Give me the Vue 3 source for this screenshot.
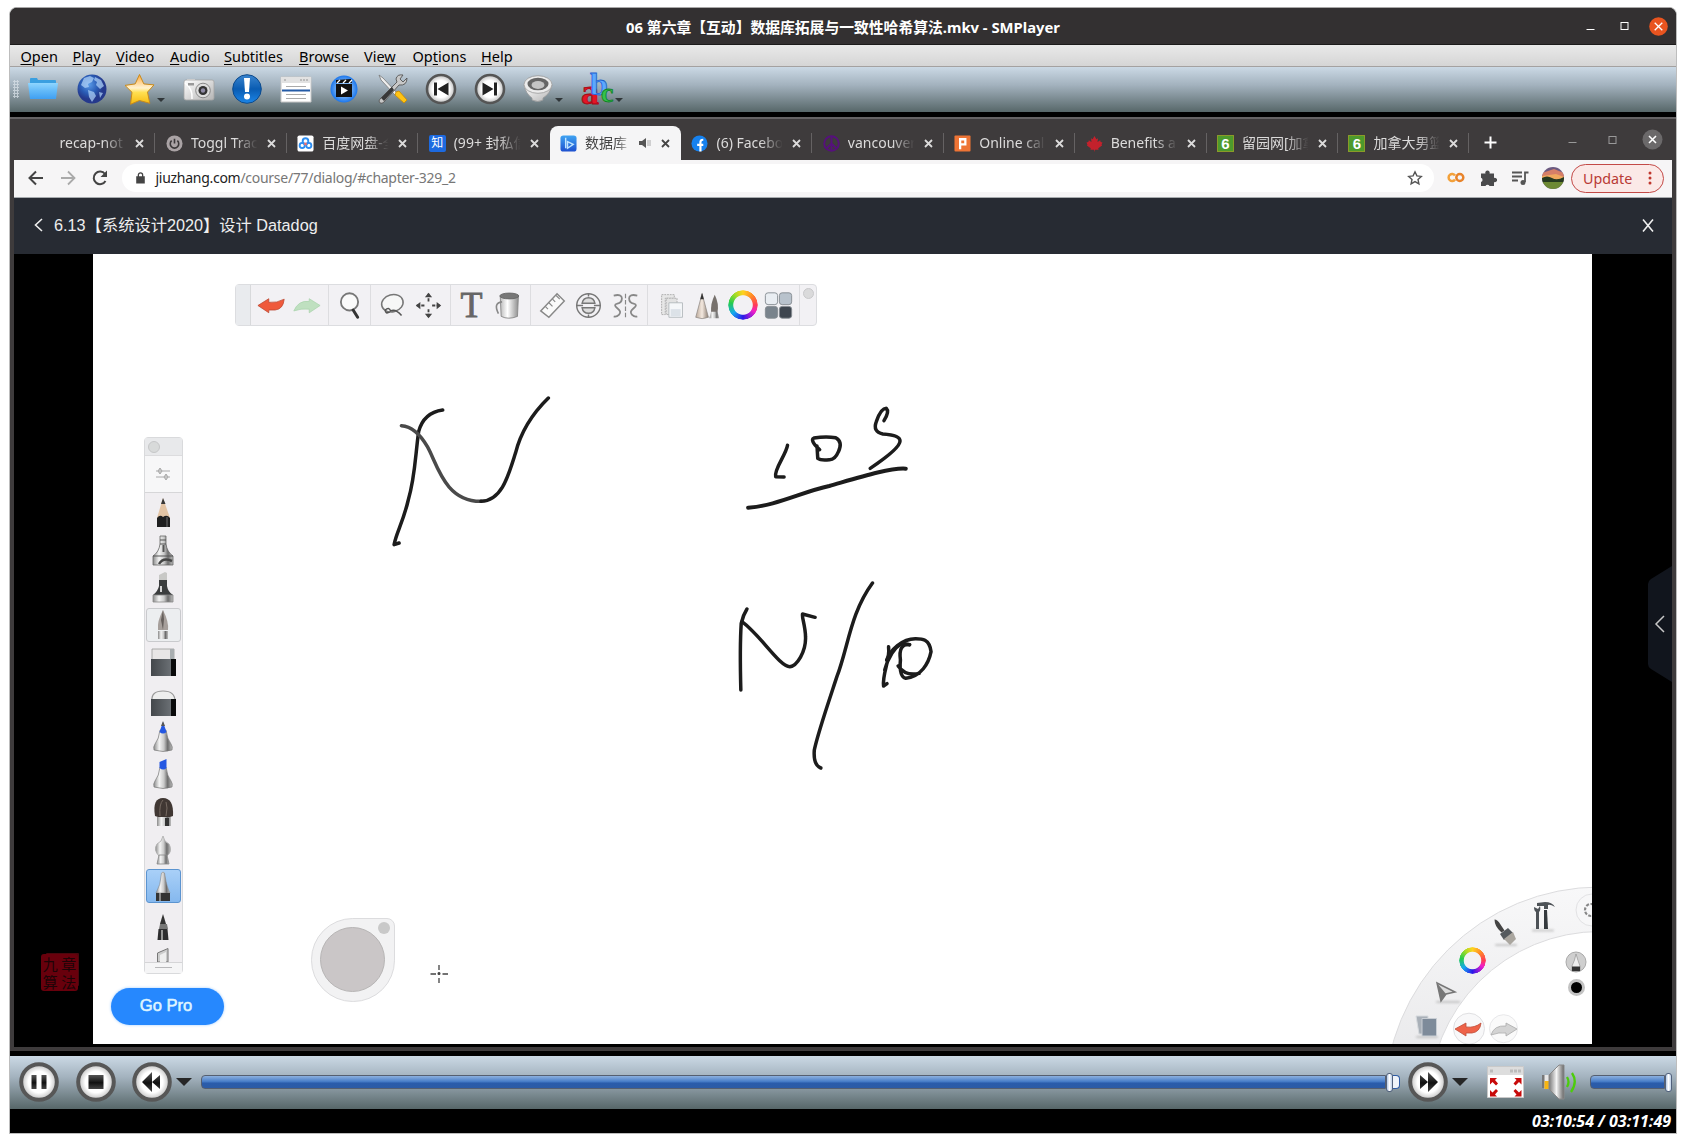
<script setup>
const menus = [
  { pre: '', key: 'O', post: 'pen', w: 52 },
  { pre: '', key: 'P', post: 'lay', w: 43.5 },
  { pre: '', key: 'V', post: 'ideo', w: 54 },
  { pre: '', key: 'A', post: 'udio', w: 54 },
  { pre: '', key: 'S', post: 'ubtitles', w: 75 },
  { pre: '', key: 'B', post: 'rowse', w: 65 },
  { pre: 'Vie', key: 'w', post: '', w: 48.5 },
  { pre: 'Op', key: 't', post: 'ions', w: 68.5 },
  { pre: '', key: 'H', post: 'elp', w: 40 },
]

const roundButton = (glyph) =>
  `<circle cx="16" cy="16" r="14" fill="url(#btn)" stroke="#555" stroke-width="2.6"/>${glyph}`

const tools = [
  { name: 'open', icon: '<path d="M3 6q0-1 1-1h6l1 2h17q1 0 1 1v4H3z" fill="#3a9fe0"/><path d="M1 10h30l-2 16H3z" fill="url(#folder)"/>' },
  { name: 'globe', icon: '<circle cx="16" cy="16" r="14.5" fill="url(#globe)"/><path d="M8 5l6-2 4 2-2 4-4 2 1 3-4 1-4-3zM19 4l6 3 3 6-4 3-4-4 1-3-3-2zM12 17l6 2 2 4-4 6-3-5zM23 19l4 1-3 5z" fill="#b4d6fa" opacity=".7"/>' },
  { name: 'favorites', menu: true, icon: '<path d="M15.500 1.500l4.300 9.400 10.200 1-6.500 7.200 2.300 11.200-10.300-2.800-9 3.800 1.500-12L1 12.400l10.200-1.500z" fill="url(#star)" stroke="#c98a1b" stroke-width="1"/>' },
  { name: 'screenshot', icon: '<path d="M4 6h8v3h-8z" fill="#e4e4e4"/><rect x="1" y="7" width="30" height="20" rx="2" fill="url(#metal)" stroke="#a5a5a5" stroke-width=".8"/><path d="M2 10q8 6 7 16" stroke="#fff" stroke-width="1.500" fill="none"/><rect x="5" y="10" width="6" height="2.500" fill="#999"/><circle cx="20" cy="17.500" r="7.300" fill="#ddd" stroke="#888"/><circle cx="20" cy="17.500" r="4.500" fill="#333"/><circle cx="20" cy="17.500" r="2.200" fill="#8f8ba5"/>' },
  { name: 'info', icon: '<circle cx="16" cy="16" r="14.300" fill="url(#info)" stroke="#0d4a8c"/><path d="M13 5h6l-1 14h-4z" fill="#fff"/><circle cx="16" cy="23.500" r="3" fill="#fff"/>' },
  { name: 'playlist', icon: '<path d="M1 4h30v25H1z" fill="#fff" stroke="#c5c5c5"/><path d="M1 4h30v6H1z" fill="#e2e2e2"/><path d="M20 7h8M4 7h3" stroke="#bbb" stroke-width="2" stroke-dasharray="2 1"/><path d="M6 13.500h20M6 21.500h20M6 25.500h20" stroke="#aaa"/><path d="M2 17.500h28" stroke="#245ba6" stroke-width="2"/>' },
  { name: 'media', icon: '<circle cx="16" cy="16" r="13.500" fill="url(#media)"/><path d="M8 11h16v13H8z" fill="#111"/><path d="M8 7l15-1 1 4H8z" fill="#111"/><path d="M9 10l3-3M15 10l3-3M21 10l3-3" stroke="#fff" stroke-width="1.300"/><path d="M13 13.500l7 4-7 4z" fill="#fff"/>' },
  { name: 'preferences', icon: '<path d="M2 2l4 3 14 15-2 2L4 7z" fill="#eee" stroke="#777" stroke-width=".8"/><path d="M19 19l3-1 8 9-3 3-9-8z" fill="#ffc313" stroke="#c98a00" stroke-width=".8"/><path d="M30 5l-4 4-3-3 3-4q-6-1-7 4l1 3L3 26q-2 2 0 4 2 1 4-1L22 12q8 1 8-7z" fill="#c8c8c8" stroke="#555" stroke-width=".9"/><path d="M4 25l3 3L17 17l-2-3z" fill="#383838"/>' },
  { name: 'previous', icon: roundButton('<path d="M9 9.500h3v13H9zM23.500 9.500v13L12.500 16z" fill="#222"/>') },
  { name: 'next', icon: roundButton('<path d="M20 9.500h3v13h-3zM8.500 9.500v13L19.500 16z" fill="#222"/>') },
  { name: 'volume', menu: true, icon: '<path d="M2 12q2 9 8 13v2q6 3 11 0v-2q7-4 9-13z" fill="url(#metal)" stroke="#999" stroke-width=".8"/><ellipse cx="16" cy="11.500" rx="14" ry="8.800" fill="#ececec" stroke="#999" stroke-width=".8"/><ellipse cx="16" cy="11" rx="10.500" ry="6.300" fill="#666"/><ellipse cx="16" cy="12" rx="6.500" ry="3.900" fill="#c4c4c4"/>' },
  { name: 'subtitles', menu: true, abc: true },
]

const tabs = [
  { title: 'recap-not', icon: '' },
  { title: 'Toggl Trac', icon: '<circle cx="9" cy="9" r="8.500" fill="#aaa3a5"/><path d="M6 6a4.500 4.500 0 1 0 6 0M9 4v5" stroke="#3b3839" stroke-width="1.700" fill="none"/>' },
  { title: '百度网盘-全', icon: '<rect x=".5" y=".5" width="17" height="17" rx="2" fill="#fff"/><circle cx="9" cy="6.500" r="3" stroke="#2d8df0" stroke-width="2" fill="none"/><circle cx="5.500" cy="11" r="2.700" stroke="#2d8df0" stroke-width="2" fill="none"/><circle cx="12.500" cy="11" r="2.700" stroke="#2d8df0" stroke-width="2" fill="none"/><circle cx="9" cy="9.500" r="1.500" fill="#f06f6f"/>' },
  { title: '(99+ 封私信', glyph: '知', bg: '#1d6ae0', icon: '' },
  { title: '数据库', active: true, icon: '<rect x=".5" y=".5" width="17" height="17" rx="3" fill="url(#info2)"/><path d="M6 3v11M8 7l6 3-6 4z" stroke="#bfe4ff" stroke-width="1.500" fill="none"/>' },
  { title: '(6) Facebo', icon: '<circle cx="9" cy="9" r="8.500" fill="#1681ee"/><path d="M10 17.500v-7H6.500M10 10.500h3M10 11V7.500q0-2.500 3-2.500" stroke="#fff" stroke-width="2.300" fill="none"/>' },
  { title: 'vancouver', icon: '<g stroke="#56107c" stroke-width="2" fill="none"><circle cx="9" cy="9" r="7.700"/><path d="M9 1v16M9 9l-5.500 5.500M9 9l5.500 5.500"/></g>' },
  { title: 'Online cal', icon: '<rect x=".5" y=".5" width="17" height="17" rx="1" fill="#ee7435"/><path d="M6.500 15V4.500h5.500v5.500H6.500" stroke="#fff" stroke-width="2.400" fill="none"/>' },
  { title: 'Benefits a', icon: '<path d="M9 1l2 3.500 1.700-1-.5 4L15 5.500l.5 2 2 .5-1 2 .5 1-4 3 .3 1.500H9.500L9 18l-.5-2.500H4.700L5 14l-4-3 .5-1-1-2 2-.5.5-2 2.800 2-.5-4 1.700 1z" fill="#c3212c"/>' },
  { title: '留园网[加拿', glyph: '6', bg: '#4d9a2c', box: true, icon: '' },
  { title: '加拿大男篮', glyph: '6', bg: '#4d9a2c', box: true, icon: '' },
]

const undo = '<path d="M1 16l12-7.500v4q9 1 17-3.500-1 11-10 12h-7v3z" fill="#ef5a3c" stroke="#b9432d" stroke-width=".8"/>'
const groups = [
  { w: 77.5, icons: [undo, '<path d="M31 16L19 8.500v3Q7 10 2 22q8-3 17-2v4z" fill="#bfe0c0" stroke="#a7d3aa" stroke-width=".8"/>'] },
  { w: 42.5, icons: ['<circle cx="16" cy="12" r="9.500" fill="#fafafa" stroke="#777" stroke-width="2"/><path d="M20 21l5 8" stroke="#333" stroke-width="3.300" stroke-linecap="round"/>'] },
  { w: 79.5, icons: ['<ellipse cx="16" cy="13.500" rx="12" ry="9.500" fill="#f7f7f7" stroke="#777" stroke-width="1.700" transform="rotate(-15 16 14)"/><path d="M8 21q4-4 6 1 5-3 12 5M13 23q-5 3-5-2" stroke="#555" stroke-width="1.700" fill="none"/>', '<path d="M16 3v9M16 20v9M3 16h9M20 16h9" stroke="#444" stroke-width="2" stroke-dasharray="3.500 1.500"/><path d="M16 2l4 5h-8zM16 30l4-5h-8zM2 16l5-4v8zM30 16l-5-4v8z" fill="#444"/>'] },
  { w: 80, icons: ['T', '<path d="M8 6l1 22q8 4 18 0l1-22z" fill="url(#bucket)" stroke="#888"/><ellipse cx="18" cy="5.500" rx="10.500" ry="3.200" fill="#777" stroke="#666"/><path d="M10 12Q0 13 6 25" stroke="#888" fill="none" stroke-width="1.800"/>'] },
  { w: 117.4, icons: ['<path d="M3 22L21 3l8 8L12 29z" fill="#fafafa" stroke="#888" stroke-width="1.600"/><path d="M8 17l3 3M12 13l4 4M16 9l3 3M20 5l4 4" stroke="#888" stroke-width="1.300"/>', '<g fill="none" stroke="#777" stroke-width="1.600"><circle cx="16" cy="16" r="13"/><path d="M9 13.500q1-6 7-6t7 6zM9 18.500q1 6 7 6t7-6zM3 16h7M22 16h7M16 3v3M16 26v3" fill="#ddd"/></g>', '<g fill="none" stroke="#888" stroke-width="2"><path d="M3 5q9-2 9 3t-5 6 0 5 2 7-6 2M29 5q-9-2-9 3t5 6 0 5-2 7 6 2"/><path d="M16 3v26" stroke-dasharray="5 2" stroke-width="1.300"/></g>'] },
  { w: 151.9, icons: ['<path d="M4 4h14v4H8v18H4z" fill="#e7e7e7" stroke="#aaa" stroke-dasharray="2 1"/><path d="M9 8h12v18H9z" fill="#e2e2e2" stroke="#aaa" stroke-dasharray="2 1"/><path d="M12 13h15v16H12z" fill="#f5f7f9" stroke="#b3b8bc"/><path d="M14 20h11v8H14z" fill="#dce2e8"/>', '<path d="M3 29L10 3l7 26q-7 3-14 0z" fill="url(#wood)" stroke="#8e8883" stroke-width=".8"/><path d="M10 2l2 7H8z" fill="#333"/><path d="M20 24q-1-10 4-20 5 10 3 20z" fill="#77716d"/><path d="M20 23h7l2 7H18z" fill="url(#chrome)"/>', 'wheel', '<g stroke="#858b91"><rect x="1.500" y="2" width="13.500" height="13" rx="3" fill="#e9edf2"/><rect x="17" y="2" width="13.500" height="13" rx="3" fill="#b8c2cc"/><rect x="1.500" y="17" width="13.500" height="13" rx="3" fill="#79838c"/><rect x="17" y="17" width="13.500" height="13" rx="3" fill="#3e464f"/></g>'] },
]

const nib = (tip) => `<path d="M13 9q-1 9-5 14-2 3-1 6 9 3 18 0 1-3-1-6-4-5-5-14z" fill="url(#chrome)" stroke="#777" stroke-width=".7"/>${tip}`
const brushes = [
  { icon: '<path d="M16 1l7 20H10z" fill="#e3c4a5"/><path d="M16 1l2.500 6h-4.500z" fill="#383838"/><path d="M10 30V21q3-4 6-1 4-3 7 1v9z" fill="#1f1f20"/><path d="M20 20v10" stroke="#555" stroke-width="1.500"/>' },
  { icon: '<path d="M13 1h6v8q1 8 7 12v9H6v-9q6-4 7-12z" fill="url(#chrome)" stroke="#666" stroke-width=".8"/><path d="M6 21h20M13 5h6M13 9h6" stroke="#555" stroke-width="1.200"/><path d="M12 29q4-7 13-3" stroke="#444" stroke-width="2.500" fill="none"/><path d="M16.500 10v7" stroke="#555" stroke-width="2"/>' },
  { icon: '<path d="M12 8V3l6-3 2 1v7z" fill="#c8c8c6"/><path d="M12 8h8v6q1 6 6 9H6q5-4 6-9z" fill="#3b3d3e"/><path d="M14 14v6" stroke="#d5d5d5" stroke-width="2"/><path d="M6 23h20v7H6z" fill="url(#chrome)" stroke="#888" stroke-width=".8"/>' },
  { boxed: true, icon: '<path d="M16 1q6 12 5 20H11Q10 12 16 1z" fill="#a69f9b"/><path d="M16 1l1 9-1 11-2-10z" fill="#66605d"/><path d="M11 22h10v8H11z" fill="url(#chrome)"/>' },
  { icon: '<path d="M5 3h22v12H5z" fill="#e8e6e6" stroke="#999" stroke-width=".8"/><path d="M23 3h4v12h-4z" fill="#a8adb0"/><path d="M4 13h25v17H4z" fill="url(#eraser)"/><path d="M24 13h5v17h-5z" fill="#08090a"/>' },
  { icon: '<path d="M5 17Q4 7 16 7t12 10z" fill="#eee" stroke="#999" stroke-width="1.200"/><path d="M4 15h25v17H4z" fill="url(#eraser)"/><path d="M24 15h5v17h-5z" fill="#08090a"/>' },
  { icon: nib('<path d="M16 1l3.500 10q-3.500 3-7 0z" fill="#2457e2"/><path d="M16 0l2 5h-4z" fill="#555"/>') },
  { icon: nib('<path d="M12.500 10V4l7-3v9q-3 3-7 0z" fill="#2457e2"/>') },
  { icon: '<path d="M8 20Q5 2 16 2t10 18q-9 4-18 0z" fill="#403733"/><path d="M13 20Q12 8 16 4M19 20q2-9 0-14" stroke="#766a62" fill="none"/><path d="M10 21h14v9H10z" fill="url(#chrome)"/><path d="M18 22h4v8h-4z" fill="#333"/>' },
  { icon: '<path d="M16 3q1 6 6 8 4 7-2 12h-8q-6-6-2-12 5-2 6-8z" fill="url(#chrome)" stroke="#aaa" stroke-width=".8"/><path d="M12 22h8l2 9H10z" fill="url(#chrome)" stroke="#888" stroke-width=".8"/>' },
  { selected: true, icon: '<path d="M16 2q2 0 2 4 2 12 5 17H9q5-9 5-17 0-4 2-4z" fill="url(#chrome)" stroke="#888" stroke-width=".6"/><path d="M9 23h14v8H9z" fill="#333"/><path d="M12 23h2v8h-2z" fill="#888"/>' },
  { icon: '<path d="M16 6q1 3 3 10h-6q2-7 3-10z" fill="#333"/><path d="M13 16h7l1 5H12z" fill="#777"/><path d="M11.500 21h9l1 11H10.500z" fill="#2d2d2f"/><path d="M15 22v10" stroke="#bbb" stroke-width="1.500"/>' },
]

const playback = [
  { name: 'pause', icon: '<path d="M12.500 13h5v14h-5zM22.500 13h5v14h-5z" fill="url(#dark)"/>' },
  { name: 'stop', icon: '<path d="M12.500 13h15v14h-15z" fill="url(#dark)"/>' },
  { name: 'rewind', icon: '<path d="M20 10v20l-10-10zM28 13v14l-8-7z" fill="url(#dark)"/>' },
]
</script>

<template>
  <svg class="defs" width="0" height="0" aria-hidden="true">
    <defs>
      <radialGradient id="btn"><stop offset=".6" stop-color="#fff" /><stop offset="1" stop-color="#bdbdbd" /></radialGradient>
      <linearGradient id="folder" x2="0" y2="1"><stop stop-color="#8fd6ff" /><stop offset=".5" stop-color="#62b9f8" /><stop offset="1" stop-color="#3f9ff2" /></linearGradient>
      <radialGradient id="globe" cx=".4" cy=".35"><stop stop-color="#5a9be8" /><stop offset=".6" stop-color="#2a5cb5" /><stop offset="1" stop-color="#25398c" /></radialGradient>
      <linearGradient id="star" x2="0" y2="1"><stop stop-color="#ffa93c" /><stop offset=".45" stop-color="#fff2cf" /><stop offset=".6" stop-color="#ffe052" /><stop offset="1" stop-color="#f6b90e" /></linearGradient>
      <linearGradient id="metal" x2="1" y2="1"><stop stop-color="#fff" /><stop offset="1" stop-color="#b4b4b4" /></linearGradient>
      <linearGradient id="info" x2="0" y2="1"><stop stop-color="#3a85cf" /><stop offset=".5" stop-color="#0a5cb2" /><stop offset="1" stop-color="#1c86e8" /></linearGradient>
      <linearGradient id="info2" x2="0" y2="1"><stop stop-color="#3fa4f2" /><stop offset="1" stop-color="#1d50cf" /></linearGradient>
      <radialGradient id="media"><stop stop-color="#d7f0ff" /><stop offset="1" stop-color="#1b76ec" /></radialGradient>
      <linearGradient id="bucket"><stop stop-color="#bbb" /><stop offset=".4" stop-color="#fff" /><stop offset="1" stop-color="#8e8e8e" /></linearGradient>
      <linearGradient id="chrome"><stop stop-color="#8a8a8a" /><stop offset=".3" stop-color="#f4f4f4" /><stop offset=".55" stop-color="#c9c9c9" /><stop offset=".75" stop-color="#6d6d6d" /><stop offset="1" stop-color="#bdbdbd" /></linearGradient>
      <linearGradient id="wood"><stop stop-color="#b9a798" /><stop offset=".5" stop-color="#f3e8df" /><stop offset="1" stop-color="#8b7c71" /></linearGradient>
      <linearGradient id="eraser"><stop stop-color="#43474b" /><stop offset="1" stop-color="#757a7f" /></linearGradient>
      <linearGradient id="dark" x2="0" y2="1"><stop stop-color="#555" /><stop offset=".55" stop-color="#111" /><stop offset="1" stop-color="#444" /></linearGradient>
      <linearGradient id="speaker"><stop stop-color="#777" /><stop offset=".5" stop-color="#f4f4f4" /><stop offset="1" stop-color="#666" /></linearGradient>
      <linearGradient id="band" x2="0" y2="1"><stop stop-color="#f8f8f9" /><stop offset="1" stop-color="#e6e6e8" /></linearGradient>
    </defs>
  </svg>

  <main class="window">
    <header class="titlebar">
      <span class="title">06 第六章【互动】数据库拓展与一致性哈希算法.mkv - SMPlayer</span>
      <div class="win-buttons">
        <svg width="9" height="12"><path d="M.5 9.500h8" stroke="#fff" /></svg>
        <svg width="9" height="10"><rect x="1" y="1.500" width="7" height="7" fill="none" stroke="#fff" /></svg>
        <svg width="19" height="19"><circle cx="9.500" cy="9.500" r="9.300" fill="#e9541f" /><path d="M5.700 5.700l7.600 7.600M13.300 5.700l-7.600 7.600" stroke="#fff" stroke-width="1.300" /></svg>
      </div>
    </header>

    <nav class="menubar">
      <span v-for="m in menus" :key="m.key" :style="{ width: m.w + 'px' }">{{ m.pre }}<u>{{ m.key }}</u>{{ m.post }}</span>
    </nav>

    <div class="toolbar">
      <i class="grip"></i>
      <div v-for="t in tools" :key="t.name" class="tool" :class="{ wide: t.menu }">
        <svg v-if="t.abc" class="abc" width="33" height="34" viewBox="0 0 33 34">
          <text x="0" y="32.500" font-size="36" fill="#e41525" stroke="#a30613">a</text>
          <text x="9" y="24" font-size="32" fill="#5ba8ff" stroke="#1c5fd0">b</text>
          <text x="20" y="30.500" font-size="28" fill="#35c24b" stroke="#0f7f24">c</text>
        </svg>
        <svg v-else width="32" height="32" viewBox="0 0 32 32" v-html="t.icon"></svg>
        <i v-if="t.menu" class="caret"></i>
      </div>
    </div>

    <section class="video">
      <div class="browser">
        <div class="tabstrip">
          <div v-for="(t, i) in tabs" :key="i" class="tab" :class="{ active: t.active, plain: i === 3 }">
            <span v-if="t.glyph" class="fav" :class="{ box: t.box }" :style="{ background: t.bg }">{{ t.glyph }}</span>
            <svg v-else class="favicon" width="17" height="17" viewBox="0 0 18 18" v-html="t.icon"></svg>
            <span class="tab-title">{{ t.title }}</span>
            <svg v-if="t.active" class="sound" width="12" height="10"><path d="M0 3h3l4-3v10L3 7H0z" fill="#555" /><path d="M9 2v6M11 2v6" stroke="#aaa" /></svg>
            <svg class="close" width="9" height="9"><path d="M1 1l7 7M8 1L1 8" stroke="currentColor" stroke-width="1.800" /></svg>
          </div>
          <svg class="plus" width="13" height="13"><path d="M6.500 .5v12M.5 6.500h12" stroke="#fff" stroke-width="2" /></svg>
          <div class="chrome-buttons">
            <svg width="9" height="12"><path d="M.5 8.500h8" stroke="#999" /></svg>
            <svg width="9" height="10"><rect x="1" y="1.500" width="7" height="7" fill="none" stroke="#999" /></svg>
            <svg width="21" height="21"><circle cx="10.500" cy="10.500" r="10" fill="#6b696a" /><path d="M7 7l7 7M14 7l-7 7" stroke="#fff" stroke-width="1.600" /></svg>
          </div>
        </div>

        <div class="addressbar">
          <div class="nav-icons">
            <svg width="16" height="16" viewBox="0 0 16 16"><path d="M15 8H2M8 1.500L1.500 8 8 14.500" stroke="#444" stroke-width="2" fill="none" /></svg>
            <svg width="16" height="16" viewBox="0 0 16 16"><path d="M1 8h13M8 1.500L14.500 8 8 14.500" stroke="#aaa" stroke-width="1.800" fill="none" /></svg>
            <svg width="16" height="16" viewBox="0 0 16 16"><path d="M13.500 11A6.300 6.300 0 1 1 13 4" stroke="#444" stroke-width="2" fill="none" /><path d="M15 .5v6.500H8.500z" fill="#444" /></svg>
          </div>
          <div class="omnibox">
            <svg width="9" height="12" viewBox="0 0 10 14"><path d="M0 5h10v8.500H0z" fill="#444" /><path d="M2.500 6V3.500a2.500 2.500 0 0 1 5 0V6" stroke="#444" stroke-width="1.500" fill="none" /></svg>
            <span class="url"><b>jiuzhang.com</b>/course/77/dialog/#chapter-329_2</span>
            <svg class="bookmark" width="16" height="16" viewBox="0 0 16 16"><path d="M8 1.800l1.900 4.100 4.400.5-3.300 3 .9 4.400L8 11.600l-3.900 2.200.9-4.400-3.300-3 4.400-.5z" fill="none" stroke="#555" stroke-width="1.400" /></svg>
          </div>
          <div class="ext-icons">
            <svg width="18" height="18" viewBox="0 0 18 18"><g fill="none" stroke-width="2.500"><path d="M8 6.500A3.500 3.500 0 1 0 8 10.500" stroke="#f3a13a" /><circle cx="12.800" cy="8.500" r="3.500" stroke="#e8832a" /></g></svg>
            <svg width="18" height="18" viewBox="0 0 18 18"><path d="M2 4.500h4.500a2.200 2.200 0 1 1 4 0H15V9a2.200 2.200 0 1 1 0 4v4h-4.500a2.200 2.200 0 0 0-4 0H2v-4a2.200 2.200 0 0 0 0-4.200z" fill="#4a4a4c" /></svg>
            <svg width="18" height="18" viewBox="0 0 18 18"><path d="M1 3.500h10M1 7.500h10M1 11.500h6M14 13V3.500h3.500" stroke="#555" stroke-width="1.800" fill="none" /><circle cx="12" cy="13.500" r="2.500" fill="#555" /></svg>
            <svg width="22" height="22" viewBox="0 0 22 22"><clipPath id="av"><circle cx="11" cy="11" r="11" /></clipPath><g clip-path="url(#av)"><path d="M0 0h22v22H0z" fill="#6c5a80" /><path d="M0 6l12-4 10 4v6H0z" fill="#d67f68" /><path d="M0 9l14-2 8 3v3H0z" fill="#f0a95e" /><path d="M0 11q5-3 10 0t12-1v6H0z" fill="#263a20" /><path d="M0 15h22v7H0z" fill="#6d8934" /></g></svg>
          </div>
          <button class="update">Update<svg width="4" height="14"><g fill="#c0362c"><circle cx="2" cy="2" r="1.500" /><circle cx="2" cy="7" r="1.500" /><circle cx="2" cy="12" r="1.500" /></g></svg></button>
        </div>

        <div class="lesson">
          <svg width="9" height="14" viewBox="0 0 9 14"><path d="M8 1L1.500 7 8 13" stroke="#eee" stroke-width="1.600" fill="none" /></svg>
          <span class="lesson-title">6.13【系统设计2020】设计 Datadog</span>
          <svg class="lesson-close" width="12" height="13"><path d="M1 .5l10 12M11 .5l-10 12" stroke="#eee" stroke-width="1.600" /></svg>
        </div>

        <div class="stage">
          <div class="left-gutter">
            <div class="seal"><span>九</span><span>章</span><span>算</span><span>法</span></div>
          </div>
          <div class="board">
            <svg class="ink" width="1499" height="790" viewBox="93 254 1499 790">
              <g transform="translate(370 380) scale(.3827 .33333)" fill="none" stroke="#1c1c1c" stroke-linecap="round" stroke-linejoin="round">
                <g class="pen">
                  <path d="M190 90Q140 98 127 155C118 230 118 290 100 360 87 425 68 460 63 494L76 489" />
                  <path d="M82 137Q120 140 150 200C175 250 195 365 290 364" stroke="#4a4a4a" />
                  <path d="M290 364C345 362 362 285 380 220 395 150 425 100 466 54" />
                  <path d="M1091 196C1087 225 1055 268 1060 290L1082 291" />
                  <path d="M1175 209Q1148 180 1160 174 1190 168 1217 173 1236 185 1224 215 1215 240 1200 239 1178 242 1170 235L1168 198" />
                  <path d="M1343 122Q1358 95 1349 85 1335 85 1323 125 1313 155 1340 162 1385 165 1385 183 1385 205 1307 265" />
                  <path class="bold" d="M988 383C1060 378 1130 335 1200 318 1270 295 1360 262 1400 266" />
                  <path d="M985 687Q975 705 970 730 966 800 969 930" />
                  <path d="M972 725C1020 765 1070 860 1097 860 1115 858 1140 815 1138 770 1138 740 1127 705 1130 702L1163 712" />
                  <path d="M1313 609C1255 700 1250 800 1220 890 1200 960 1170 1060 1161 1110Q1158 1155 1178 1164" />
                  <path d="M1355 800C1360 840 1338 880 1342 918L1351 911M1345 870Q1360 810 1390 790L1410 794" />
                  <path d="M1410 794Q1380 790 1386 840 1382 890 1400 895C1440 890 1460 850 1466 815 1462 775 1440 776 1425 776 1390 776 1360 810 1350 840M1380 858Q1400 890 1435 880" />
                </g>
              </g>
              <g stroke="#444" stroke-width="1.300"><path d="M439 965v5M439 978v5M430.500 974h5.500M442.500 974h5.500" /><circle cx="439" cy="973.500" r=".9" fill="#333" /></g>
              <path d="M1384.600 1102a215.400 215.400 0 0 1 215.400-215v44.500a171 171 0 0 0-171 171z" fill="url(#band)" stroke="#dcdcde" />
              <circle cx="1592" cy="910" r="16" fill="#f7f7f8" stroke="#e2e2e4" />
              <circle cx="1591" cy="910" r="6" fill="none" stroke="#888" stroke-width="2.200" stroke-dasharray="3 1.500" />
              <g class="shade"><path d="M1533 930.500h20M1496 945h20M1437 1002h22M1417 1037h20" stroke="#aaa" stroke-width="2" stroke-linecap="round" opacity=".6" /></g>
              <path d="M1416 1016h12v18h-9z" fill="#a9b0b8" stroke="#d7dade" /><path d="M1422 1018.500h14.500v17.500H1422z" fill="#7e8b9a" stroke="#c9ced4" />
              <path d="M1437 983l18 9-9 2-5 7z" fill="#dcdcdc" stroke="#777" stroke-width="1.500" /><path d="M1437 983l9 11-5 7z" fill="#777" />
              <path d="M1494.500 919.500q3 0 6 5l4 6-3 2q-7-6-7-13z" fill="#444" /><path d="M1500 934l8-6 5 5-9 7z" fill="#555a5e" /><path d="M1504 939l9-7 3 7-6 6z" fill="#aaa69f" />
              <path d="M1534 907q0 4 2 5v17h3v-17q2-2 1-6l-2 3-2-1zM1537 903l8-1q7 0 10 5-5-3-7-2v4h-4v-3h-7z" fill="#4d5257" /><path d="M1544 910h3l1 19h-4z" fill="#353a3e" />
              <circle cx="1576" cy="962" r="10" fill="#cfcfcf" stroke="#aaa" /><path d="M1576 954q2 7 4 12v5h-8v-5q3-6 4-12z" fill="#eee" stroke="#888" stroke-width=".6" /><path d="M1572 966.500h8v4.500h-8z" fill="#333" />
              <circle cx="1576.500" cy="987.500" r="7" fill="#000" stroke="#c3c3c3" stroke-width="3" />
              <circle cx="1469" cy="1028.700" r="15.500" fill="#f8f8f9" stroke="#e0e0e2" /><path d="M1455 1029l11-6v4q9 1 15-4-1 9-9 10h-6v3z" fill="#ee6248" stroke="#be4c37" stroke-width=".8" />
              <circle cx="1503.500" cy="1028.700" r="14" fill="#fafafa" stroke="#e8e8ea" /><path d="M1517 1029l-11-6v3q-12-1-15 9 8-3 15-2v3z" fill="#d3d3d3" stroke="#aaa" stroke-width=".8" />
            </svg>
            <i class="wheel radial-wheel"></i>

            <div class="tool-strip">
              <i class="strip-handle"></i>
              <div v-for="(g, i) in groups" :key="i" class="strip-group" :style="{ width: g.w + 'px' }">
                <template v-for="(ic, j) in g.icons" :key="j">
                  <span v-if="ic === 'T'" class="letter-t">T</span>
                  <i v-else-if="ic === 'wheel'" class="wheel"></i>
                  <svg v-else width="29" height="29" viewBox="0 0 32 32" v-html="ic"></svg>
                </template>
              </div>
              <i class="strip-knob"></i>
            </div>

            <div class="palette">
              <div class="palette-head"><i></i></div>
              <div class="palette-settings"><svg width="16" height="14"><path d="M1 4h14M1 10h14" stroke="#aaa" stroke-width="1.200" /><path d="M5 1l2 3-2 3-2-3zM11 7l2 3-2 3-2-3z" fill="#c4c4c4" stroke="#aaa" /></svg></div>
              <div class="brushes">
                <div v-for="(b, i) in brushes" :key="i" class="brush" :class="{ boxed: b.boxed, selected: b.selected }">
                  <svg width="32" height="32" viewBox="0 0 32 32" v-html="b.icon"></svg>
                </div>
                <svg class="partial" width="12" height="14"><path d="M.5 5L11 .5V14H.5z" fill="#ccc" stroke="#777" /><path d="M3 7l6-3v10H3z" fill="#eee" /></svg>
              </div>
              <div class="palette-foot"><i></i></div>
            </div>

            <div class="puck"><i class="puck-color"></i><i class="puck-dot"></i></div>
            <button class="go-pro">Go Pro</button>
          </div>
          <svg class="drawer" width="24" height="116"><path d="M24 0v116L3 103q-3-2-3-5V18q0-3 3-5z" fill="#11151d" /><path d="M16 50l-8 8 8 8" stroke="#c8c8c8" stroke-width="1.500" fill="none" /></svg>
        </div>
      </div>
    </section>

    <footer class="controls">
      <svg v-for="p in playback" :key="p.name" class="round" width="40" height="40" viewBox="0 0 40 40"><circle cx="20" cy="20" r="17.800" fill="url(#btn)" stroke="#575757" stroke-width="4" /><g v-html="p.icon"></g></svg>
      <i class="drop"></i>
      <div class="seek"><i class="seek-fill"></i><i class="thumb"></i><i class="seek-rest"></i></div>
      <svg class="round forward" width="40" height="40" viewBox="0 0 40 40"><circle cx="20" cy="20" r="17.800" fill="url(#btn)" stroke="#575757" stroke-width="4" /><path d="M12 13v14l8-7zM20 10v20l10-10z" fill="url(#dark)" /></svg>
      <i class="drop second"></i>
      <svg class="fullscreen" width="37" height="32" viewBox="0 0 37 32"><path d="M.5.500h36v31H.5z" fill="#fff" stroke="#c9c9c9" /><path d="M1 1h35v8H1z" fill="#ddd" /><path d="M3 5h3M23 5h3M27 5h3M31 5h3" stroke="#bbb" stroke-width="3" /><g fill="#c80a0a"><path d="M3 12h7l-2 2 3 3.500-2 2L5.500 16 3 18.500zM34.500 12h-7l2 2-3 3.500 2 2L32 16l2.500 2.500zM3 30.500h7l-2-2 3-3.500-2-2L5.500 26.500 3 24zM34.500 30.500h-7l2-2-3-3.500 2-2 3.500 3.500 2.500-2.500z" /></g></svg>
      <svg class="speaker" width="36" height="36" viewBox="0 0 36 36"><path d="M1 11h4v13H1z" fill="#777" /><path d="M3.500 11H8v14H3.500z" fill="#e8e8e8" /><path d="M3.500 17H8v8H3.500z" fill="#f7b512" /><path d="M8 11L18 1h5v34h-5L8 25z" fill="url(#speaker)" stroke="#888" /><path d="M26 13q3 5 0 10M31 9q6 9-1 19" stroke="#4ccd0b" stroke-width="2.300" fill="none" /></svg>
      <div class="volume"><i class="seek-fill"></i><i class="thumb"></i></div>
    </footer>
    <div class="status">03:10:54 / 03:11:49</div>
  </main>
</template>

<style>
body { background: #fff; }
#app { display: flow-root; }
</style>

<style scoped>
* { box-sizing: border-box; }
i { display: block; flex: none; }
svg { display: block; flex: none; }
.defs { position: absolute; }
.window {
  width: 1668px; height: 1127px; margin: 7px 0 0 9px; padding: 0;
  display: flex; flex-direction: column; border: 1px solid #bdbdbd; border-top-color: #a9a8a8;
  border-radius: 8px 8px 0 0; overflow: hidden; background: #000;
  font-family: "Noto Sans", "Noto Sans CJK SC", sans-serif;
}
.titlebar {
  height: 37px; flex: none; display: grid; place-items: center; background: #333031; border-bottom: 1px solid #1c1b1b;
}
.title { grid-area: 1/1; padding-top: 2px; color: #fff; font: bold 14.800px/34px "Noto Sans", "Noto Sans CJK SC", sans-serif; white-space: nowrap; }
.win-buttons { grid-area: 1/1; justify-self: end; display: flex; align-items: center; gap: 25px; margin-right: 8px; }
.win-buttons svg:last-child { margin-left: -5px; }
.menubar { height: 22px; flex: none; display: flex; padding-left: 10.500px; background: linear-gradient(#e9e9e9, #d5d5d5); border-bottom: 1px solid #a4a1a0; }
.menubar span { font-size: 14.500px; line-height: 23px; color: #000; white-space: nowrap; }
.menubar u { text-underline-offset: 2px; text-decoration-thickness: 1px; }
.toolbar { height: 45px; flex: none; display: flex; align-items: center; padding-bottom: 1px; background: linear-gradient(#cbd9e5, #a3b2be 40%, #576769); }
.grip { width: 6px; height: 18px; margin-left: 3px; background: radial-gradient(#dbe3ea 1px, transparent 1.300px) 0 0/3px 3px; opacity: .7; }
.tool { width: 48.500px; height: 32px; padding-left: 8.200px; display: flex; align-items: flex-end; }
.tool.wide { width: 58.500px; }
.caret { border: 4px solid transparent; border-top: 4px solid #303639; border-bottom: 0; margin: 0 0 3px 1px; }
.abc { overflow: visible; font-family: "Liberation Serif", serif; font-weight: bold; stroke-width: .8px; }

.video { height: 944px; flex: none; padding: 5px 0; background: #000; }
.browser { height: 934px; display: flex; flex-direction: column; padding: 0 4px 4px; border-top: 2px solid #656364; background: #3e3b3c; }
.tabstrip { height: 41px; flex: none; display: flex; align-items: flex-end; padding-left: 10px; }
.tab { position: relative; width: 131.400px; height: 34px; padding: 0 11px 0 10.500px; display: flex; align-items: center; color: #dcdbdb; }
.tab::after { content: ""; position: absolute; right: 0; top: 7px; width: 1px; height: 20px; background: #656263; }
.tab.active::after, .tab.plain::after { display: none; }
.favicon, .fav { margin-right: 8px; }
.fav { width: 17px; height: 17px; flex: none; border-radius: 2px; color: #fff; font: 12px/16px "Noto Sans", "Noto Sans CJK SC", sans-serif; text-align: center; }
.fav.box { border: 1px solid #8a9a28; border-radius: 0; font: bold 15px/15px "Liberation Sans", sans-serif; }
.tab-title { width: 68px; flex: none; overflow: hidden; white-space: nowrap; font-size: 14px; line-height: 22px; -webkit-mask-image: linear-gradient(90deg, #000 65%, transparent 98%); mask-image: linear-gradient(90deg, #000 65%, transparent 98%); }
.close { margin-left: auto; }
.tab.active { background: #f5f5f6; border-radius: 8px 8px 0 0; color: #444; }
.active .tab-title { width: 48px; margin-right: 6px; }
.plus { margin: 0 0 11px 15px; }
.chrome-buttons { display: flex; align-items: center; height: 21px; gap: 31px; margin: 0 9px 10px auto; }
.chrome-buttons svg:last-child { margin-left: -6px; }
.addressbar { height: 38px; flex: none; display: flex; align-items: center; padding-bottom: 1px; background: #f6f5f6; border-bottom: 1px solid #a7abae; }
.nav-icons { width: 108px; display: flex; gap: 16px; padding-left: 14px; }
.omnibox { width: 1312px; height: 28px; display: flex; align-items: center; padding: 0 11px 0 13.500px; border-radius: 15px; background: #fff; }
.url { margin-left: 11px; font-size: 14px; letter-spacing: -.28px; line-height: 22px; color: #777; }
.url b { font-weight: 400; color: #222; }
.bookmark { margin-left: auto; }
.ext-icons { display: flex; align-items: center; gap: 14px; margin-left: 13px; }
.ext-icons svg:last-child { margin-left: -1px; }
.update { width: 93px; height: 29px; margin-left: 7px; padding: 0 11px; display: flex; align-items: center; justify-content: space-between; border: 1.500px solid #c34a47; border-radius: 15px; background: #fbe9e7; color: #b83a35; font: 14.300px "Noto Sans", sans-serif; }
.lesson { height: 56px; flex: none; display: flex; align-items: center; padding: 0 18px 2px 19.500px; background: #272b33; color: #eee; }
.lesson-title { margin-left: 11.500px; font: 16.250px/24px "Liberation Sans", "Noto Sans CJK SC", sans-serif; white-space: nowrap; }
.lesson-close { margin-left: auto; }
.stage { height: 793px; flex: none; display: flex; align-items: flex-start; background: #000; }
.left-gutter { width: 79px; height: 793px; padding: 700px 0 0 27px; }
.seal { width: 37px; height: 37px; display: grid; grid-template-columns: 1fr 1fr; place-items: center; border-radius: 3px; background: #68000c; color: #1d0407; font: 15px/17px "Noto Sans CJK SC", sans-serif; box-shadow: 3px -3px 0 -2px #4a070d; }
.board { position: relative; width: 1499px; height: 790px; background: #fff; overflow: hidden; }
.ink { position: absolute; inset: 0; }
.pen { filter: blur(.5px); }
.pen path { vector-effect: non-scaling-stroke; stroke-width: 3.500px; }
.pen .bold { stroke-width: 4px; }
.shade { filter: blur(1px); }
.drawer { margin: 312px 0 0 56px; }

.wheel { width: 30px; height: 30px; border-radius: 50%; background: conic-gradient(#ffd21f, #ff8a28 45deg, #ff3a55 90deg, #f020c8 120deg, #2b18e8 180deg, #16a8f0 230deg, #25cc4c 280deg, #a9dc26 325deg, #ffd21f); -webkit-mask: radial-gradient(circle closest-side, transparent 62%, #000 68%, #000 96%, transparent); mask: radial-gradient(circle closest-side, transparent 62%, #000 68%, #000 96%, transparent); }
.radial-wheel { position: absolute; left: 1366px; top: 692.500px; width: 27px; height: 27px; }
.tool-strip { position: absolute; left: 141.500px; top: 30px; width: 582px; height: 42px; display: flex; border: 1.500px solid #dcdde0; border-radius: 4px; background: #f2f1f4; }
.strip-handle { width: 15.500px; background: #e9ebee; border-right: 1px solid #d8d9db; }
.strip-group { display: flex; align-items: center; justify-content: space-evenly; border-right: 1px solid #dddde0; }
.strip-group:nth-of-type(6) { padding-left: 4px; }
.letter-t { width: 26px; text-align: center; font: 36px/38px "Liberation Serif", serif; color: #666; -webkit-text-stroke: .8px #666; }
.strip-knob { width: 11px; height: 11px; margin: 3px 0 0 3px; border: 1px solid #c9c9cb; border-radius: 50%; background: #dadadb; }

.palette { position: absolute; left: 50.500px; top: 183px; width: 39.500px; height: 537px; display: flex; flex-direction: column; border: 1.500px solid #d9dadc; border-radius: 4px; background: #f0eef1; }
.palette-head { height: 18px; flex: none; padding: 3px; background: #e8e9eb; border-bottom: 1px solid #dcdcde; }
.palette-head i { width: 12px; height: 12px; border: 1px solid #c6c7c8; border-radius: 50%; background: #d8dada; }
.palette-settings { height: 37px; flex: none; display: grid; place-items: center; background: #f7f7f8; border-bottom: 1.500px solid #d6d6d8; }
.brushes { height: 468.500px; padding-top: 2px; overflow: hidden; display: flex; flex-direction: column; align-items: center; }
.brush { width: 35px; height: 34.500px; margin: 1px 0 1.800px; flex: none; display: grid; place-items: center; border-radius: 3px; }
.brush.boxed { border: 1.500px solid #c9cacd; background: #eceef0; }
.brush.selected { border: 1.500px solid #5b94d0; background: linear-gradient(#a9d0f8, #85b8ee); }
.partial { margin-top: 5px; }
.palette-foot { flex: 1; display: grid; place-items: center; border-top: 1px solid #d5d5d7; background: #f5f5f6; }
.palette-foot i { width: 17px; height: 1px; background: #b8b8ba; }
.puck { position: absolute; left: 218px; top: 664px; width: 83.500px; height: 83.500px; display: grid; place-items: center; border: 1.500px solid #dcdcde; border-radius: 50% 8px 50% 50%; background: #f2f2f3; }
.puck-color { width: 65px; height: 65px; border: 1.500px solid #b7b5b5; border-radius: 50%; background: #cac6c7; }
.puck-dot { position: absolute; right: 4px; top: 3px; width: 12px; height: 12px; border-radius: 50%; background: #c9c9c9; }
.go-pro { position: absolute; left: 17.500px; top: 733.500px; width: 113px; height: 37.500px; border: 0; padding: 0 2px 2px 0; border-radius: 19px; background: #2688fe; box-shadow: 0 0 3px #9ecbff; color: #dff4ff; font: 16.500px "Liberation Sans", sans-serif; -webkit-text-stroke: .6px #dff4ff; }

.controls { height: 53px; flex: none; display: flex; align-items: center; padding: 0 0 1px 9px; background: linear-gradient(#cbd9e5, #a3b2be 40%, #576769); }
.round { margin-right: 16.500px; }
.drop { border: 8px solid transparent; border-top: 8px solid #262626; border-bottom: 0; margin-left: -12.500px; }
.seek { height: 19px; width: 1199px; margin-left: 9px; display: flex; align-items: center; }
.seek-fill { flex: 1; height: 14px; border: 1px solid #555f70; border-radius: 4px 0 0 4px; background: linear-gradient(#8cb0de, #4a7fc9 45%, #2a5cab 60%, #2c5ba5); }
.thumb { width: 7px; height: 19px; border: 1px solid #51617c; border-radius: 3px; background: linear-gradient(90deg, #b6cbe6, #fff, #bdd0e8); }
.seek-rest { width: 7px; height: 14px; border: 1.500px solid #2c5ba5; border-left: 0; border-radius: 0 4px 4px 0; background: #eef3f9; }
.forward { margin: 0 0 0 8px; }
.drop.second { margin-left: 4px; }
.fullscreen { margin-left: 18.500px; }
.speaker { margin-left: 17.500px; }
.volume { width: 83px; margin-left: 13px; display: flex; align-items: center; }
.volume .thumb { margin-right: 1px; }
.status { flex: 1; padding-right: 5px; text-align: right; color: #fff; font: italic bold 16px/24px "Open Sans", sans-serif; }
</style>
